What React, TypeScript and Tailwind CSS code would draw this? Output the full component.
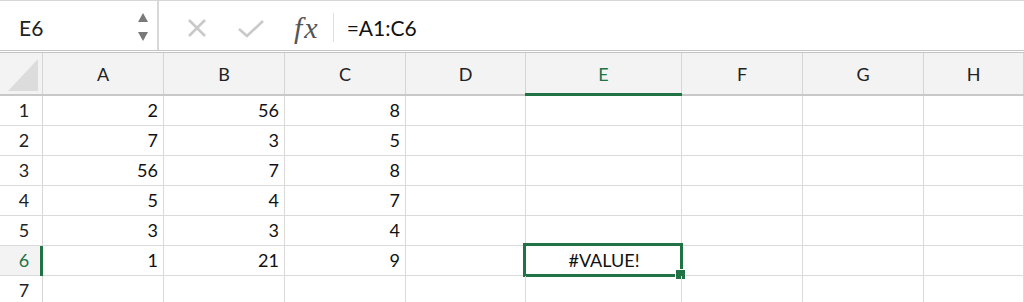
import React from 'react';

const cols = ['A', 'B', 'C', 'D', 'E', 'F', 'G', 'H'];

const data: (string | number)[][] = [
  [2, 56, 8],
  [7, 3, 5],
  [56, 7, 8],
  [5, 4, 7],
  [3, 3, 4],
  [1, 21, 9],
  [],
];

const gridCols = 'grid grid-cols-[43px_121px_121px_121px_120px_156px_121px_121px_1fr]';

const FormulaBar: React.FC = () => {
  return (
    <div className="flex h-[53px] border-t border-[#d6d6d6] border-b-[3px] border-double border-b-[#c4c4c4] bg-white">
      <div className="w-[157px] flex items-center pl-[19px] pt-[5px] text-[21px] text-[#222]">
        <span className="flex-1">E6</span>
        <div className="flex flex-col gap-[10px] pr-[9px] pb-[3px]">
          <svg width="10" height="9" viewBox="0 0 10 9">
            <path d="M5 0 L10 9 L0 9 Z" fill="#7a7a7a" />
          </svg>
          <svg width="10" height="9" viewBox="0 0 10 9">
            <path d="M0 0 L10 0 L5 9 Z" fill="#7a7a7a" />
          </svg>
        </div>
      </div>
      <div className="w-[2px] bg-[#d8d8d8]" />
      <div className="flex items-center pt-[4px]">
        <svg width="22" height="22" viewBox="0 0 22 22" className="ml-[27px]">
          <path d="M3 3 L19 19 M19 3 L3 19" stroke="#c9c9c9" strokeWidth="2.6" />
        </svg>
        <svg width="26" height="18" viewBox="0 0 26 18" className="ml-[30px] mt-[2px]">
          <path d="M1 9 L9 16 L25 1" stroke="#c9c9c9" strokeWidth="2.6" fill="none" />
        </svg>
        <span className="ml-[30px] text-[30px] italic tracking-[2px] text-[#555] font-['Liberation_Serif',serif] leading-none">
          fx
        </span>
      </div>
      <div className="self-center w-px h-[29px] bg-[#dedede] ml-[13px] mt-[4px]" />
      <div className="flex-1 flex items-center pl-[13px] pt-[5px] text-[21px] text-[#111]">=A1:C6</div>
    </div>
  );
};

const HeaderRow: React.FC = () => {
  return (
    <div className={`${gridCols} h-[43px] bg-[#f3f3f3] border-b-2 border-[#c8c8c8]`}>
      <div className="relative border-r border-[#d6d6d6]">
        <svg width="30" height="32" viewBox="0 0 30 32" className="absolute right-[4px] bottom-[3px]">
          <path d="M30 0 L30 32 L0 32 Z" fill="#dcdcdc" />
        </svg>
      </div>
      {cols.map((c) => (
        <div
          key={c}
          className={
            c === 'E'
              ? 'relative flex items-center justify-center border-r border-[#d6d6d6] text-[#217346] bg-[#f3f3f3]'
              : 'flex items-center justify-center border-r border-[#d6d6d6] text-[#222]'
          }
        >
          <span className="pt-[2px]">{c}</span>
          {c === 'E' && <div className="absolute left-[-1px] right-[-1px] bottom-[-2px] h-[3px] bg-[#217346]" />}
        </div>
      ))}
    </div>
  );
};

const App: React.FC = () => {
  return (
    <div className="w-[1024px] h-[302px] overflow-hidden bg-white font-['Lato',sans-serif] text-[18px]">
      <FormulaBar />
      <HeaderRow />
      {data.map((row, r) => (
        <div key={r} className={`${gridCols} h-[30px] border-b border-[#dadada]`}>
          <div
            className={
              r === 5
                ? 'relative flex items-center justify-center border-r border-[#d6d6d6] bg-[#f3f3f3] text-[#217346]'
                : 'flex items-center justify-center border-r border-[#d6d6d6] bg-white text-[#222]'
            }
          >
            <span className="pl-[6px]">{r + 1}</span>
            {r === 5 && <div className="absolute right-[-1px] top-0 bottom-[-1px] w-[3px] bg-[#217346]" />}
          </div>
          {cols.map((c, ci) => (
            <div
              key={c}
              className="relative flex items-center justify-end pr-[5px] border-r border-[#dadada] text-[#111]"
            >
              {ci < 3 && row[ci] !== undefined ? row[ci] : null}
              {r === 5 && c === 'E' && (
                <>
                  <div className="absolute left-[-3px] top-[-3px] right-[-2px] bottom-[-2px] border-[3px] border-[#217346] flex items-center justify-center">
                    <span className="pl-[2px]">#VALUE!</span>
                  </div>
                  <div className="absolute right-[-5px] bottom-[-5px] w-[11px] h-[11px] bg-[#217346] border border-white" />
                </>
              )}
            </div>
          ))}
        </div>
      ))}
    </div>
  );
};

export default App;
